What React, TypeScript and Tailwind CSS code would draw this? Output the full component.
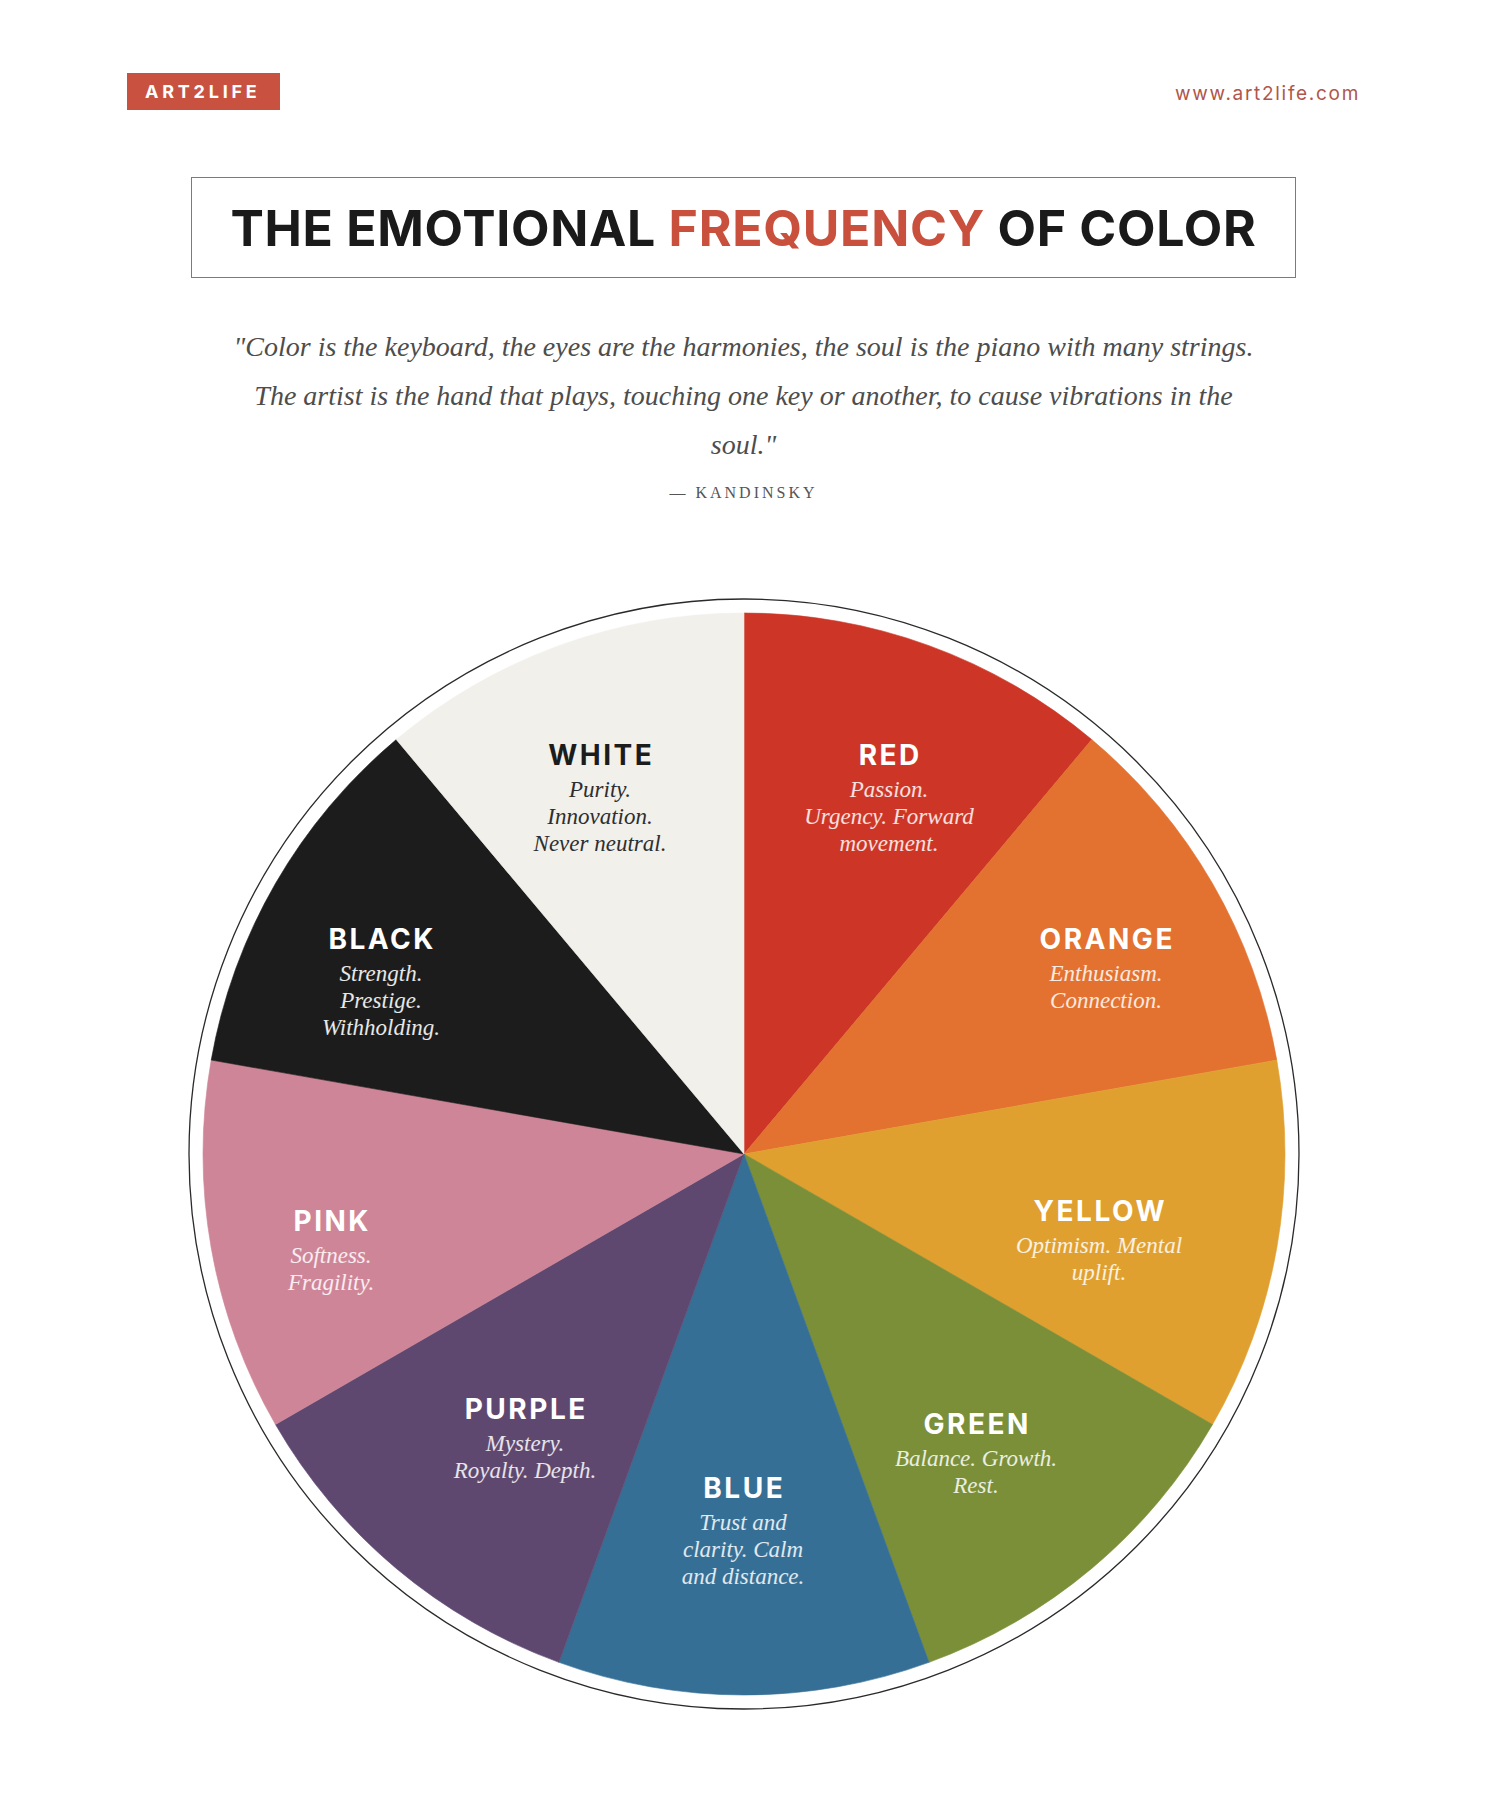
import React from "react";

type Slice = { color: string; a0: number };

const slices: Slice[] = [
  { color: "#cd3626", a0: 0 },
  { color: "#e3712f", a0: 40 },
  { color: "#e0a030", a0: 80 },
  { color: "#7a8f37", a0: 120 },
  { color: "#366f95", a0: 160 },
  { color: "#5f4870", a0: 200 },
  { color: "#cf8598", a0: 240 },
  { color: "#1c1c1c", a0: 280 },
  { color: "#f2f0eb", a0: 320 },
];

const CX = 556;
const CY = 556;
const R = 541;

function pt(deg: number, r: number) {
  const t = (deg * Math.PI) / 180;
  return [CX + r * Math.sin(t), CY - r * Math.cos(t)];
}

function slicePath(a0: number, a1: number) {
  const [x0, y0] = pt(a0, R);
  const [x1, y1] = pt(a1, R);
  return `M ${CX} ${CY} L ${x0} ${y0} A ${R} ${R} 0 0 1 ${x1} ${y1} Z`;
}

type Label = {
  title: string;
  lines: string[];
  pos: string;
  titleColor: string;
  descColor: string;
};

const labels: Label[] = [
  {
    title: "WHITE",
    lines: ["Purity.", "Innovation.", "Never neutral."],
    pos: "left-[412.5px] top-[139.5px]",
    titleColor: "text-[#1c1c1c]",
    descColor: "text-[#2e2e2e]",
  },
  {
    title: "RED",
    lines: ["Passion.", "Urgency. Forward", "movement."],
    pos: "left-[701.5px] top-[139.5px]",
    titleColor: "text-white",
    descColor: "text-white/85",
  },
  {
    title: "BLACK",
    lines: ["Strength.", "Prestige.", "Withholding."],
    pos: "left-[193.5px] top-[323.5px]",
    titleColor: "text-white",
    descColor: "text-white/90",
  },
  {
    title: "ORANGE",
    lines: ["Enthusiasm.", "Connection."],
    pos: "left-[918.5px] top-[323.5px]",
    titleColor: "text-white",
    descColor: "text-white/85",
  },
  {
    title: "YELLOW",
    lines: ["Optimism. Mental", "uplift."],
    pos: "left-[911.5px] top-[596px]",
    titleColor: "text-white",
    descColor: "text-white/85",
  },
  {
    title: "PINK",
    lines: ["Softness.", "Fragility."],
    pos: "left-[143.5px] top-[606px]",
    titleColor: "text-white",
    descColor: "text-white/85",
  },
  {
    title: "PURPLE",
    lines: ["Mystery.", "Royalty. Depth."],
    pos: "left-[337.5px] top-[794px]",
    titleColor: "text-white",
    descColor: "text-white/85",
  },
  {
    title: "GREEN",
    lines: ["Balance. Growth.", "Rest."],
    pos: "left-[788.5px] top-[809px]",
    titleColor: "text-white",
    descColor: "text-white/85",
  },
  {
    title: "BLUE",
    lines: ["Trust and", "clarity. Calm", "and distance."],
    pos: "left-[555.5px] top-[873px]",
    titleColor: "text-white",
    descColor: "text-white/85",
  },
];

function WheelLabel({ l }: { l: Label }) {
  return (
    <div
      className={`absolute ${l.pos} -translate-x-1/2 flex flex-col items-center text-center whitespace-nowrap`}
    >
      <div
        className={`font-['Inter',sans-serif] font-bold text-[28px] leading-[34px] tracking-[0.09em] pl-[0.09em] ${l.titleColor}`}
      >
        {l.title}
      </div>
      <div
        className={`mt-[4px] font-['Liberation_Serif',serif] italic text-[23px] leading-[27px] ${l.descColor}`}
      >
        {l.lines.map((s, i) => (
          <div key={i}>{s}</div>
        ))}
      </div>
    </div>
  );
}

export default function App() {
  return (
    <div className="w-[1487px] h-[1816px] overflow-hidden bg-white flex flex-col">
      <header className="flex items-center justify-between pl-[127px] pr-[127px] pt-[73px]">
        <div className="h-[37px] flex items-center pl-[18px] pr-[19px] bg-[#c9513f] text-white font-['Inter',sans-serif] font-bold text-[18px] tracking-[0.21em]">
          ART2LIFE
        </div>
        <div className="mt-[6px] font-['Inter',sans-serif] text-[19px] tracking-[1.7px] text-[#b0564a]">
          www.art2life.com
        </div>
      </header>

      <div className="mt-[67px] mx-auto w-[1105px] h-[101px] border-[1.5px] border-[#c0604f] flex items-center justify-center">
        <h1 className="font-['Inter',sans-serif] font-bold text-[50px] leading-none text-[#1a1a1a] tracking-[0.014em]">
          THE EMOTIONAL <span className="text-[#c8503c]">FREQUENCY</span> OF COLOR
        </h1>
      </div>

      <blockquote className="mt-[44px] text-center font-['Liberation_Serif',serif] italic text-[28px] leading-[49px] text-[#4d4d4d]">
        "Color is the keyboard, the eyes are the harmonies, the soul is the piano with many strings.
        <br />
        The artist is the hand that plays, touching one key or another, to cause vibrations in the
        <br />
        soul."
      </blockquote>
      <div className="mt-[14px] text-center font-['Liberation_Serif',serif] text-[16px] leading-[20px] tracking-[3px] text-[#555555]">
        — KANDINSKY
      </div>

      <div className="mt-[95px] mx-auto relative w-[1112px] h-[1112px]">
        <svg width="1112" height="1112" viewBox="0 0 1112 1112" className="absolute inset-0">
          <circle cx={CX} cy={CY} r={555} fill="#ffffff" stroke="#2a2a2a" strokeWidth={1.3} />
          {slices.map((s, i) => (
            <path
              key={i}
              d={slicePath(s.a0, s.a0 + 40)}
              fill={s.color}
              stroke={s.color}
              strokeWidth={0.6}
              strokeLinejoin="round"
            />
          ))}
        </svg>
        {labels.map((l) => (
          <WheelLabel key={l.title} l={l} />
        ))}
      </div>
    </div>
  );
}
